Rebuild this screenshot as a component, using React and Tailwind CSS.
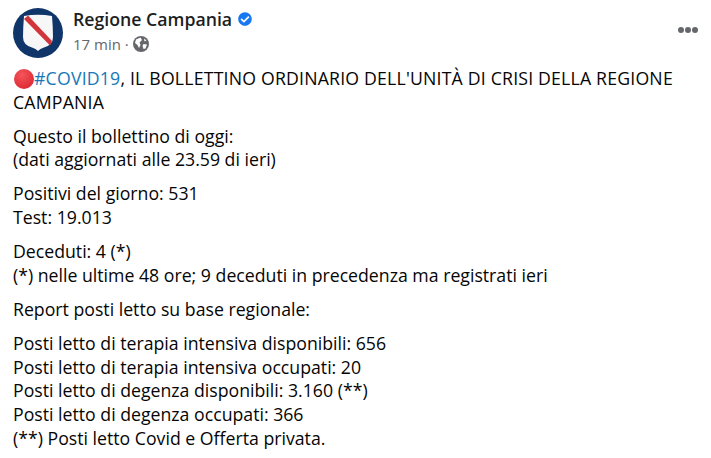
import { FaCheckCircle } from "react-icons/fa";

const fontStack = { fontFamily: '"Open Sans", "Liberation Sans", sans-serif' };

const Logo = () => (
  <svg width="50" height="50" viewBox="0 0 50 50">
    <circle cx="25" cy="25" r="25" fill="#0f3569" />
    <path d="M11 8 Q25 5.5 39 8 Q40 20 40 29 Q40 37 31 39.5 Q27 40.5 25 43 Q23 40.5 19 39.5 Q10 37 10 29 Q10 20 11 8 Z" fill="#f7f7f7" />
    <path d="M11 11 L15 7.5 L39 33 L37 37.5 Z" fill="#d2343c" />
  </svg>
);

const Globe = () => (
  <svg width="16" height="16" viewBox="0 0 16 16">
    <circle cx="8" cy="8" r="8" fill="#65676b" />
    <path d="M3 3.5 L7.5 1.5 L9 4 L6.5 6.5 L7.5 9 L6 12 L4.5 9 L2 7 Z" fill="#fff" />
    <path d="M10.5 8 L14 8.5 L12.5 12.5 L10.5 13 L9.5 10 Z M11 2.5 L13.5 4.5 L11.5 5.5 Z" fill="#fff" />
  </svg>
);

const Block = ({ lines }) => (
  <div className="mt-[10.3px]">
    {lines.map((line) => (
      <div key={line}>{line}</div>
    ))}
  </div>
);

const App = () => {
  return (
    <div className="w-[711px] h-[458px] overflow-hidden bg-white text-[#050505]" style={fontStack}>
      <div className="flex items-start px-[13px] pt-[8px]">
        <Logo />
        <div className="ml-[10px] flex-1">
          <div className="flex items-center h-[22px] text-[17.7px] font-semibold text-[#1c1e21]">
            Regione Campania
            <FaCheckCircle className="ml-[6px] text-[#1877f2]" size={14} />
          </div>
          <div className="flex items-center h-[22px] mt-[3px] text-[15px] text-[#65676b]">
            17 min · <span className="ml-[4px]"><Globe /></span>
          </div>
        </div>
        <div className="flex gap-[1px] mt-[19px]">
          <span className="w-[6px] h-[6px] rounded-full bg-[#65676b]" />
          <span className="w-[6px] h-[6px] rounded-full bg-[#65676b]" />
          <span className="w-[6px] h-[6px] rounded-full bg-[#65676b]" />
        </div>
      </div>
      <div className="px-[13px] mt-[9px] text-[17.7px] leading-[23.7px]">
        <div className="flex items-center whitespace-nowrap">
          <span className="w-[20px] h-[20px] rounded-full bg-[radial-gradient(circle_at_40%_30%,#f4555a,#d81e2a)] ml-[1px] shrink-0" />
          <span className="tracking-[0.19px]"><span className="text-[#1877b8]">#COVID19</span>, IL BOLLETTINO ORDINARIO DELL'UNITÀ DI CRISI DELLA REGIONE</span>
        </div>
        <div className="tracking-[0.19px]">CAMPANIA</div>
        <Block lines={["Questo il bollettino di oggi:", "(dati aggiornati alle 23.59 di ieri)"]} />
        <Block lines={["Positivi del giorno: 531", "Test: 19.013"]} />
        <Block lines={["Deceduti: 4 (*)", "(*) nelle ultime 48 ore; 9 deceduti in precedenza ma registrati ieri"]} />
        <Block lines={["Report posti letto su base regionale:"]} />
        <Block lines={[
          "Posti letto di terapia intensiva disponibili: 656",
          "Posti letto di terapia intensiva occupati: 20",
          "Posti letto di degenza disponibili: 3.160 (**)",
          "Posti letto di degenza occupati: 366",
          "(**) Posti letto Covid e Offerta privata.",
        ]} />
      </div>
    </div>
  );
};

export default App;
